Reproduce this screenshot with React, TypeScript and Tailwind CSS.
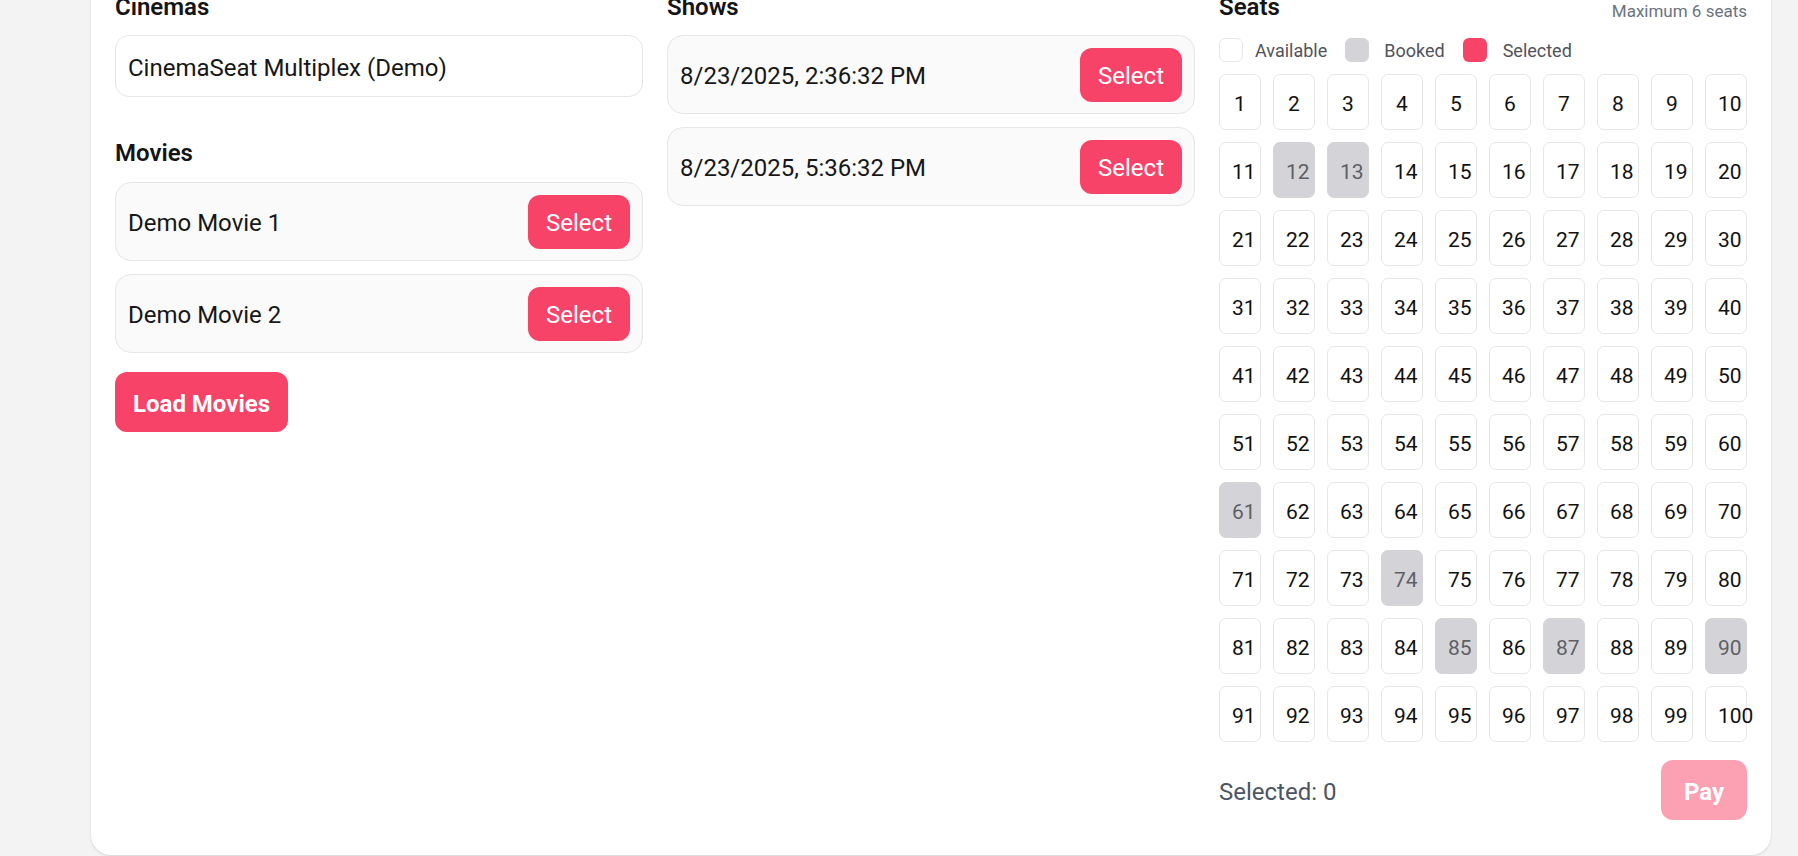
import React from "react";

const movies = ["Demo Movie 1", "Demo Movie 2"];
const shows = ["8/23/2025, 2:36:32 PM", "8/23/2025, 5:36:32 PM"];
const booked = new Set([12, 13, 61, 74, 85, 87, 90]);
const seats = Array.from({ length: 100 }, (_, i) => i + 1);

function SelectRow({ label }: { label: string }) {
  return (
    <div className="flex h-[79px] items-center justify-between rounded-[16px] border border-[#e6e6e6] bg-[#fafafa] px-[12px]">
      <span className="pt-[3px] text-[24px] text-[#171717]">{label}</span>
      <button className="h-[54px] rounded-[12px] bg-[#f84368] px-[18px] pt-[3px] text-[24px] text-white">Select</button>
    </div>
  );
}

function Heading({ children }: { children: React.ReactNode }) {
  return <h2 className="h-[36px] pt-[2px] text-[24px] font-semibold leading-[36px] text-[#141414]">{children}</h2>;
}

export default function App() {
  return (
    <div className="min-h-screen bg-[#f3f3f3] pb-[1px] font-['Roboto',sans-serif]">
      <div className="ml-[91px] mt-[-37px] w-[1680px] rounded-b-[20px] bg-white px-[24px] pb-[35px] pt-[24px] shadow-sm">
        <div className="grid grid-cols-3 gap-[24px]">
          {/* cinemas + movies */}
          <div>
            <Heading>Cinemas</Heading>
            <div className="mt-[12px] flex h-[62px] items-center rounded-[14px] border border-[#e6e6e6] bg-white px-[12px] pt-[3px] text-[24px] text-[#171717]">
              CinemaSeat Multiplex (Demo)
            </div>
            <div className="mt-[36px]">
              <Heading>Movies</Heading>
              <div className="mt-[13px] flex flex-col gap-[13px]">
                {movies.map((m) => (
                  <SelectRow key={m} label={m} />
                ))}
              </div>
              <button className="mt-[19px] h-[60px] rounded-[12px] bg-[#f84368] px-[18px] pt-[3px] text-[24px] font-bold text-white">
                Load Movies
              </button>
            </div>
          </div>

          {/* shows */}
          <div>
            <Heading>Shows</Heading>
            <div className="mt-[12px] flex flex-col gap-[13px]">
              {shows.map((s) => (
                <SelectRow key={s} label={s} />
              ))}
            </div>
          </div>

          {/* seats */}
          <div>
            <div className="flex items-end justify-between">
              <Heading>Seats</Heading>
              <span className="text-[17px] leading-[24px] text-[#6b7280]">Maximum 6 seats</span>
            </div>
            <div className="mt-[15px] flex h-[24px] items-center gap-[18px] text-[18px] text-[#52525b]">
              <div className="flex items-center gap-[12px]">
                <span className="h-[24px] w-[24px] rounded-[6px] border border-[#e5e7eb] bg-white" />
                Available
              </div>
              <div className="flex items-center gap-[15px]">
                <span className="h-[24px] w-[24px] rounded-[6px] border border-[#d4d4d8] bg-[#d4d4d8]" />
                Booked
              </div>
              <div className="flex items-center gap-[16px]">
                <span className="h-[24px] w-[24px] rounded-[6px] bg-[#f84368]" />
                Selected
              </div>
            </div>
            <div className="mt-[12px] grid grid-cols-10 gap-[12px]">
              {seats.map((n) => {
                const isBooked = booked.has(n);
                return (
                  <button
                    key={n}
                    disabled={isBooked}
                    className={
                      isBooked
                        ? "h-[56px] overflow-visible whitespace-nowrap rounded-[7px] border border-[#d4d4d8] bg-[#d4d4d8] px-[12px] pt-[5px] text-center text-[21px] text-[#5f5f66]"
                        : "h-[56px] overflow-visible whitespace-nowrap rounded-[7px] border border-[#e6e6e6] bg-white px-[12px] pt-[5px] text-center text-[21px] text-[#111111]"
                    }
                  >
                    {n}
                  </button>
                );
              })}
            </div>
            <div className="mt-[18px] flex items-center justify-between">
              <span className="pt-[3px] text-[24px] text-[#4b5563]">Selected: 0</span>
              <button disabled className="h-[60px] w-[86px] rounded-[12px] bg-[#fca1b3] pt-[3px] text-[24px] font-bold text-white">
                Pay
              </button>
            </div>
          </div>
        </div>
      </div>
    </div>
  );
}
